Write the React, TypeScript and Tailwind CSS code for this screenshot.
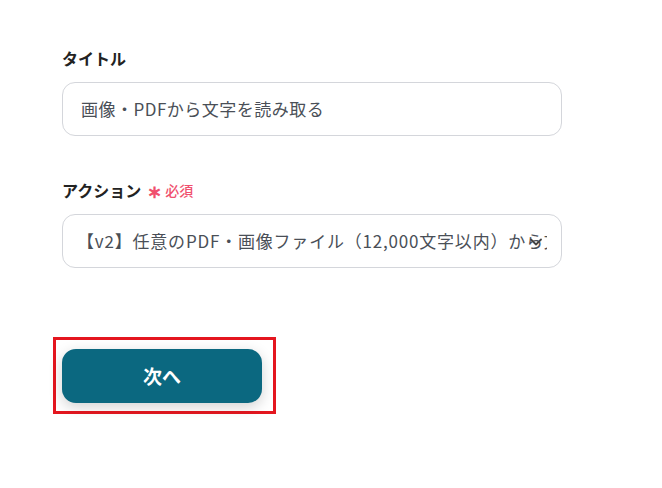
import React from "react";

export default function App() {
  const font = { fontFamily: '"Noto Sans CJK JP", "Noto Sans", sans-serif' };
  return (
    <div className="w-[662px] h-[488px] bg-white overflow-hidden" style={font}>
      <div className="pl-[62px] pt-[47px] w-[562px]">
        <div className="text-[16px] leading-[22px] font-bold text-[#222]">タイトル</div>
        <div className="mt-[13px] h-[54px] w-[500px] rounded-[13px] border border-[#d4d6db] flex items-center pl-[18px]">
          <span className="text-[17px] tracking-[0.5px] text-[#4a4f57]">画像・PDFから文字を読み取る</span>
        </div>

        <div className="mt-[43px] flex items-center h-[22px]">
          <span className="text-[16px] leading-[22px] font-bold text-[#222]">アクション</span>
          <span className="ml-[6px] text-[18px] leading-[22px] font-bold text-[#f0506e]">∗</span>
          <span className="ml-[3px] text-[14px] leading-[22px] font-medium text-[#f0506e]">必須</span>
        </div>
        <div className="relative mt-[13px] h-[54px] w-[500px] rounded-[13px] border border-[#d4d6db] flex items-center pl-[14px]">
          <div className="w-[470px] overflow-hidden whitespace-nowrap text-[17px] tracking-[0.8px] text-[#4a4f57]">
            【v2】任意のPDF・画像ファイル（12,000文字以内）から文字を読み取る
          </div>
          <svg
            className="absolute right-[19px] top-[23px]"
            width="12"
            height="8"
            viewBox="0 0 12 8"
            fill="none"
            stroke="#444"
            strokeWidth="1.8"
            strokeLinecap="round"
            strokeLinejoin="round"
          >
            <path d="M1 1.5 L6 6.5 L11 1.5" />
          </svg>
        </div>

        <div className="mt-[69px] -ml-[9px] w-[223px] h-[77px] border-[3px] border-[#e4161f] pl-[6px] pt-[9px]">
          <button className="w-[200px] h-[54px] rounded-[14px] bg-[#0b6880] text-white text-[19px] font-bold shadow-[0_4px_14px_rgba(0,0,0,0.18)]">
            次へ
          </button>
        </div>
      </div>
    </div>
  );
}
